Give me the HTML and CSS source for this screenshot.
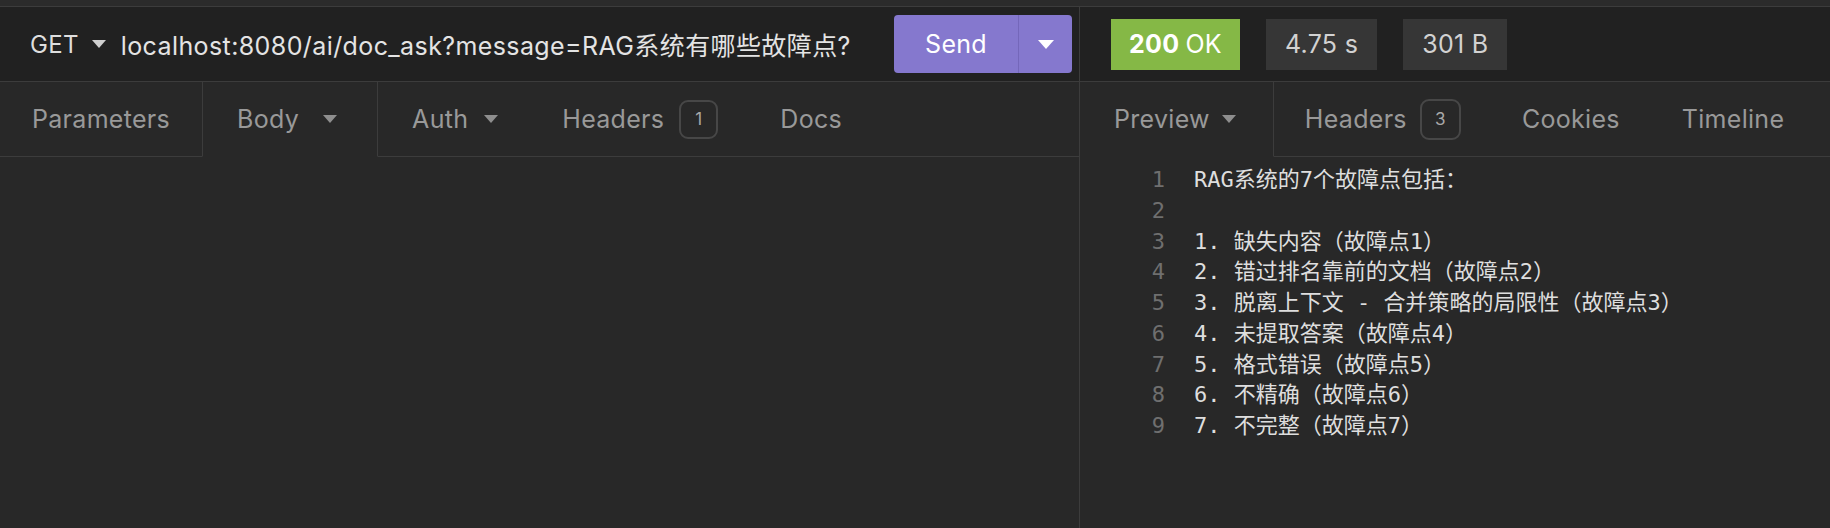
FILE: index.html
```html
<!DOCTYPE html>
<html lang="zh-CN">
<head>
<meta charset="utf-8">
<title>Insomnia</title>
<link rel="stylesheet" href="styles.css">
</head>
<body>
<div class="app">
  <div class="strip"></div>
  <div class="main">
    <section class="pane pane-left">
      <div class="bar urlbar">
        <div class="method">GET<span class="caret caret-light"></span></div>
        <div class="url">localhost:8080/ai/doc_ask?message=RAG系统有哪些故障点?</div>
        <div class="send">
          <span class="send-label">Send</span>
          <span class="send-more"><span class="caret caret-white"></span></span>
        </div>
      </div>
      <nav class="tabs">
        <div class="tab tab-params">Parameters</div>
        <div class="tab active tab-body">Body<span class="caret caret-gray caret-far"></span></div>
        <div class="tab tab-auth">Auth<span class="caret caret-gray"></span></div>
        <div class="tab tab-headers">Headers<span class="count">1</span></div>
        <div class="tab">Docs</div>
        <div class="tab-fill"></div>
      </nav>
      <div class="content"></div>
    </section>
    <section class="pane pane-right">
      <div class="bar statusbar">
        <div class="pill pill-ok"><b>200</b> OK</div>
        <div class="pill">4.75 s</div>
        <div class="pill">301 B</div>
      </div>
      <nav class="tabs">
        <div class="tab active tab-preview">Preview<span class="caret caret-gray"></span></div>
        <div class="tab tab-rheaders">Headers<span class="count">3</span></div>
        <div class="tab tab-cookies">Cookies</div>
        <div class="tab">Timeline</div>
        <div class="tab-fill"></div>
      </nav>
      <div class="content code">
        <div class="line"><span class="ln">1</span><span class="txt">RAG系统的7个故障点包括：</span></div>
        <div class="line"><span class="ln">2</span><span class="txt"></span></div>
        <div class="line"><span class="ln">3</span><span class="txt">1. 缺失内容（故障点1）</span></div>
        <div class="line"><span class="ln">4</span><span class="txt">2. 错过排名靠前的文档（故障点2）</span></div>
        <div class="line"><span class="ln">5</span><span class="txt">3. 脱离上下文 - 合并策略的局限性（故障点3）</span></div>
        <div class="line"><span class="ln">6</span><span class="txt">4. 未提取答案（故障点4）</span></div>
        <div class="line"><span class="ln">7</span><span class="txt">5. 格式错误（故障点5）</span></div>
        <div class="line"><span class="ln">8</span><span class="txt">6. 不精确（故障点6）</span></div>
        <div class="line"><span class="ln">9</span><span class="txt">7. 不完整（故障点7）</span></div>
      </div>
    </section>
  </div>
</div>
</body>
</html>
```
FILE: styles.css
```css
* { box-sizing: border-box; }
html, body { margin: 0; padding: 0; }
body {
  width: 1830px;
  height: 528px;
  overflow: hidden;
  background: #282828;
  font-family: Inter, "Noto Sans CJK SC", sans-serif;
  color: #9a9a9a;
}
.app { display: flex; flex-direction: column; height: 528px; }
.strip {
  height: 7px;
  flex: none;
  background: #2b2b2b;
  border-bottom: 1px solid #3c3c3c;
}
.main { flex: 1; display: flex; min-height: 0; }
.pane { display: flex; flex-direction: column; min-width: 0; }
.pane-left { width: 1080px; flex: none; border-right: 1px solid #3c3c3c; }
.pane-right { flex: 1; }

.bar {
  height: 75px;
  flex: none;
  background: #212121;
  border-bottom: 1px solid #3c3c3c;
  display: flex;
  align-items: center;
}

/* URL bar */
.method {
  display: flex;
  align-items: center;
  padding-left: 30px;
  font-size: 24px;
  letter-spacing: 0.3px;
  color: #dedede;
}
.method .caret { margin-left: 13px; }
.url {
  margin-left: 15px;
  flex: 1;
  font-size: 25px;
  letter-spacing: 0.4px;
  color: #e4e4e4;
  white-space: nowrap;
}
.send {
  display: flex;
  height: 58px;
  margin-right: 7px;
  border-radius: 4px;
  background: #8578ce;
  overflow: hidden;
}
.send-label {
  width: 125px;
  display: flex;
  align-items: center;
  justify-content: center;
  color: #fff;
  font-size: 25px;
  letter-spacing: 0.3px;
  border-right: 1px solid #7467ba;
}
.send-more {
  width: 53px;
  display: flex;
  align-items: center;
  justify-content: center;
}

/* carets */
.caret {
  display: inline-block;
  width: 0;
  height: 0;
  border-left: 7px solid transparent;
  border-right: 7px solid transparent;
  border-top: 8px solid #cfcfcf;
}
.caret-white { border-left-width: 8px; border-right-width: 8px; border-top: 9px solid #fff; }
.caret-gray { border-top-color: #8e8e8e; margin-left: 16px; }
.caret-far { margin-left: 24px; }

/* tabs */
.tabs {
  height: 75px;
  flex: none;
  display: flex;
  background: #282828;
}
.tab {
  display: flex;
  align-items: center;
  padding: 0 31px;
  font-size: 25px;
  letter-spacing: 0.3px;
  color: #999;
  border-bottom: 1px solid #3c3c3c;
  white-space: nowrap;
}
.tab.active {
  border-left: 1px solid #3c3c3c;
  border-right: 1px solid #3c3c3c;
  border-bottom-color: transparent;
  padding: 0 40px 0 34px;
}
.tab-params { padding: 0 32px; }
.tab-preview.active { border-left: none; padding-right: 37px; }
.tab-preview .caret { margin-left: 12px; }
.tab-auth { padding-left: 34px; }
.tab-headers { padding-left: 33px; }
.tab-rheaders { padding-left: 31px; }
.tab-rheaders .count { margin-left: 13px; }
.tab-cookies { padding-left: 30px; }
.tab-fill { flex: 1; border-bottom: 1px solid #3c3c3c; }
.count {
  margin-left: 15px;
  width: 39px;
  height: 39px;
  border: 2px solid #474747;
  border-radius: 9px;
  display: flex;
  align-items: center;
  justify-content: center;
  font-size: 17px;
  letter-spacing: 0;
  color: #a8a8a8;
}
.tab-rheaders .count { width: 41px; height: 41px; }

.content { flex: 1; background: #282828; }

/* status */
.statusbar { padding-left: 31px; gap: 26px; }
.pill {
  height: 51px;
  padding: 0 19px;
  display: flex;
  align-items: center;
  background: #363636;
  color: #d2d2d2;
  font-size: 25px;
  letter-spacing: 0.3px;
  white-space: nowrap;
}
.pill-ok { background: #85b846; color: #fff; padding: 0 18px; }
.pill-ok b { font-weight: 700; margin-right: 6px; }

/* code preview */
.code {
  padding-top: 8px;
  font-family: "DejaVu Sans Mono", "Noto Sans CJK SC", monospace;
  font-size: 22px;
  line-height: 30.75px;
}
.line { display: flex; height: 30.75px; }
.ln {
  width: 85px;
  flex: none;
  text-align: right;
  color: #6f6f6f;
}
.txt {
  margin-left: 29px;
  color: #dedede;
  white-space: pre;
}
```
